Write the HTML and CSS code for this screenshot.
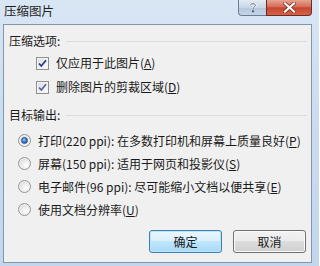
FILE: index.html
```html
<!DOCTYPE html>
<html lang="zh-CN">
<head>
<meta charset="utf-8">
<title>压缩图片</title>
<link rel="stylesheet" href="styles.css">
</head>
<body>
<div class="window">
  <div class="titlebar">
    <span class="title">压缩图片</span>
    <div class="caption">
      <div class="cap-btn help">
        <svg width="10" height="11" viewBox="0 0 10 11"><path d="M2.5 3.2 C2.5 1.2 7.5 1.2 7.5 3.4 C7.5 5 5 5 5 7" fill="none" stroke="#fff" stroke-width="2.2"/><path d="M2.5 3.2 C2.5 1.2 7.5 1.2 7.5 3.4 C7.5 5 5 5 5 7" fill="none" stroke="#4c5f78" stroke-width="1"/><rect x="4" y="8.3" width="2" height="2" fill="#4c5f78"/></svg>
      </div>
      <div class="cap-btn close">
        <svg width="13" height="11" viewBox="0 0 13 11"><path d="M2 1.5 L11 9.5 M11 1.5 L2 9.5" stroke="#7a2a1c" stroke-width="3.6" stroke-linecap="square"/><path d="M2 1.5 L11 9.5 M11 1.5 L2 9.5" stroke="#fff" stroke-width="2.2" stroke-linecap="square"/></svg>
      </div>
    </div>
  </div>
  <div class="panel">
    <div class="group-head first"><span>压缩选项:</span><i class="rule"></i></div>
    <div class="checks">
      <div class="row check-row">
        <span class="box">
          <svg width="13" height="13" viewBox="0 0 13 13"><path d="M3 6.5 L5.3 9 L10 3.3" fill="none" stroke="#243d8a" stroke-width="1.8"/></svg>
        </span>
        <span class="label">仅应用于此图片(<u>A</u>)</span>
      </div>
      <div class="row check-row">
        <span class="box">
          <svg width="13" height="13" viewBox="0 0 13 13"><path d="M3 6.5 L5.3 9 L10 3.3" fill="none" stroke="#5266a6" stroke-width="1.8"/></svg>
        </span>
        <span class="label">删除图片的剪裁区域(<u>D</u>)</span>
      </div>
    </div>
    <div class="group-head second"><span>目标输出:</span><i class="rule"></i></div>
    <div class="radios">
      <div class="row radio-row"><span class="radio on"><i></i></span><span class="label">打印(220 ppi): 在多数打印机和屏幕上质量良好(<u>P</u>)</span></div>
      <div class="row radio-row"><span class="radio"></span><span class="label">屏幕(150 ppi): 适用于网页和投影仪(<u>S</u>)</span></div>
      <div class="row radio-row"><span class="radio"></span><span class="label">电子邮件(96 ppi): 尽可能缩小文档以便共享(<u>E</u>)</span></div>
      <div class="row radio-row"><span class="radio"></span><span class="label">使用文档分辨率(<u>U</u>)</span></div>
    </div>
    <div class="buttons">
      <button class="btn default">确定</button>
      <button class="btn">取消</button>
    </div>
  </div>
</div>
</body>
</html>
```

FILE: styles.css
```css
* { box-sizing: border-box; }
html, body { margin: 0; padding: 0; }
body {
  width: 319px;
  height: 266px;
  overflow: hidden;
  font-family: "Microsoft YaHei", "Noto Sans CJK SC", "Noto Sans", sans-serif;
  font-size: 12px;
  color: #1a1a1a;
}
.window {
  width: 319px;
  height: 266px;
  display: flex;
  flex-direction: column;
  background: linear-gradient(180deg, #d9e6f4 0%, #cbddf0 40%, #c2d6ed 100%);
}
.titlebar {
  height: 24px;
  display: flex;
  align-items: flex-start;
  justify-content: space-between;
  flex: none;
}
.title {
  padding-left: 4px;
  padding-top: 3px;
  line-height: 16px;
  font-size: 12.5px;
  color: #1e1e1e;
}
.caption {
  display: flex;
  margin-right: 7px;
  height: 16px;
}
.cap-btn {
  height: 16px;
  display: flex;
  align-items: center;
  justify-content: center;
  border: 1px solid #6b7d95;
  border-top: none;
}
.help {
  width: 28px;
  border-radius: 0 0 0 4px;
  background: linear-gradient(180deg, #e3ebf5 0%, #c8d6e6 50%, #b5c7dc 52%, #c5d5e7 100%);
  border-right: none;
}
.close {
  width: 46px;
  border-radius: 0 0 4px 0;
  border-color: #6e2b22;
  background: linear-gradient(180deg, #e7a393 0%, #d56d58 45%, #c7452d 52%, #d3644a 100%);
}
.panel {
  flex: 1;
  margin: 0 7px 3px 3px;
  border: 1px solid #8496ac;
  background: #f0f0f0;
  display: flex;
  flex-direction: column;
  padding: 0 4px 0 5px;
}
.group-head {
  display: flex;
  align-items: center;
  height: 16px;
  line-height: 16px;
}
.group-head.first { margin-top: 8px; }
.group-head.second { margin-top: 8px; }
.rule {
  flex: 1;
  height: 1px;
  margin-left: 6px;
  background: #d9dde2;
}
.checks { margin-top: 2px; }
.row {
  display: flex;
  align-items: center;
  white-space: nowrap;
  line-height: 16px;
}
.check-row { height: 24px; padding-left: 27px; }
.radios { margin-top: 6px; }
.radio-row { height: 23px; padding-left: 9px; }
.label { margin-left: 7px; }
u { text-decoration: underline; text-underline-offset: 1px; }
.box {
  width: 13px;
  height: 13px;
  flex: none;
  border: 1px solid #8e8f8f;
  background: linear-gradient(135deg, #dcdcdc 0%, #f4f4f4 70%, #ffffff 100%);
  box-shadow: inset 0 0 0 1px #f4f4f4;
  position: relative;
}
.box svg { position: absolute; left: -1px; top: -1px; }
.radio {
  width: 13px;
  height: 13px;
  flex: none;
  border-radius: 50%;
  border: 1px solid #949494;
  background: radial-gradient(circle at 65% 65%, #ffffff 0%, #eaeaea 45%, #cfcfcf 100%);
  display: flex;
  align-items: center;
  justify-content: center;
  box-shadow: inset 0 0 0 1px #f2f2f2;
}
.radio.on i {
  width: 7px;
  height: 7px;
  border-radius: 50%;
  background: radial-gradient(circle at 40% 35%, #a6d3f5 0%, #3b83c8 45%, #1b4f8f 100%);
  border: 1px solid #244f86;
}
.buttons {
  display: flex;
  justify-content: flex-end;
  gap: 11px;
  margin-top: 9px;
  padding-right: 1px;
}
.btn {
  width: 73px;
  height: 23px;
  padding: 0;
  font-family: inherit;
  font-size: 12px;
  color: #1a1a1a;
  border: 1px solid #707070;
  border-radius: 3px;
  background: linear-gradient(180deg, #f2f2f2 0%, #ebebeb 48%, #dddddd 50%, #cfcfcf 100%);
  box-shadow: inset 0 0 0 1px #fbfbfb;
}
.btn.default {
  border-color: #3c7fb1;
  background: linear-gradient(180deg, #eaf6fd 0%, #d9f0fc 48%, #bee6fd 50%, #a7d9f5 100%);
  box-shadow: inset 0 0 0 1px #bfe4f8;
}
```
